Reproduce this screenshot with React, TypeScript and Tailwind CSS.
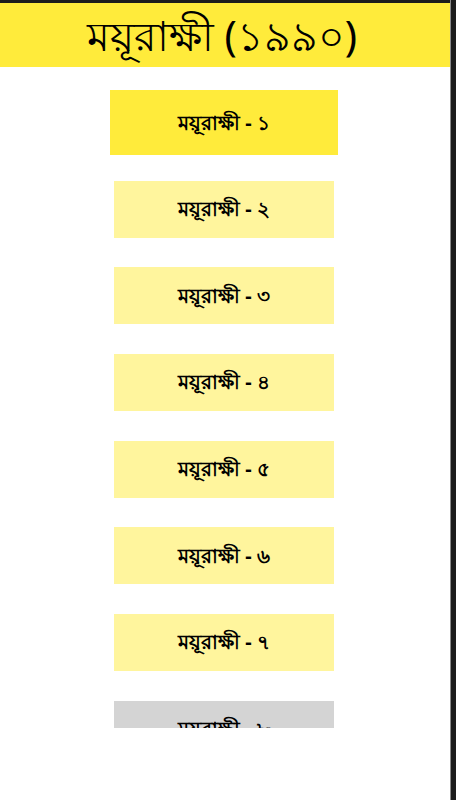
import React from "react";

const parts = ["১", "২", "৩", "৪", "৫", "৬", "৭", "৮"];

export default function App() {
  return (
    <div className="flex h-[800px] w-[456px] bg-white" style={{ fontFamily: '"Noto Sans", "Liberation Sans", sans-serif' }}>
      <div className="flex w-[450px] flex-col">
        <div className="h-[3px] bg-[#1c1c1c]" />
        {/* Header */}
        <div className="flex h-[64px] items-center justify-center bg-[#ffeb3b] pr-[6px]">
          <h1 className="text-[41px] leading-none text-black">ময়ূরাক্ষী (১৯৯০)</h1>
        </div>

        {/* List */}
        <div className="flex h-[661px] flex-col items-center gap-[29.67px] overflow-hidden pt-[27px] pr-[2px]">
          {parts.map((p, i) => {
            const box =
              i === 0
                ? "h-[65px] w-[228px] -my-[4px] bg-[#ffeb3b]"
                : i === 7
                  ? "h-[57px] w-[220px] bg-[#d4d4d4]"
                  : "h-[57px] w-[220px] bg-[#fff59d]";
            return (
              <div key={p} className={`flex shrink-0 items-center justify-center ${box}`}>
                <span className="text-[20px] font-bold text-black">ময়ূরাক্ষী - {p}</span>
              </div>
            );
          })}
        </div>
      </div>
      {/* window edge */}
      <div className="w-px bg-[#8a8a8a]" />
      <div className="w-[5px] bg-[#1c1c1c]" />
    </div>
  );
}
